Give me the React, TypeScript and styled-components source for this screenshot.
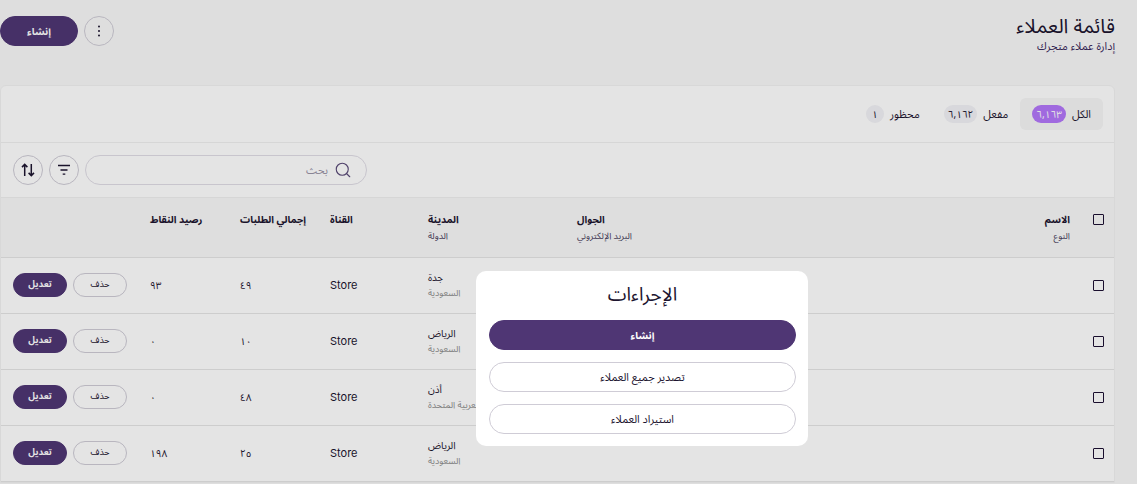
import React from "react";
import styled, { createGlobalStyle } from "styled-components";
import { Search } from "lucide-react";

const FONT = `"Noto Sans Arabic", "Noto Kufi Arabic", "DejaVu Sans", "Inter", sans-serif`;
const COLUMNS = "44px 430px 63px 149px 98px 90px 90px 137px 12px";

const GlobalStyle = createGlobalStyle`
  html, body {
    margin: 0;
    height: 100%;
    overflow: hidden;
  }
  body {
    font-family: ${FONT};
    color: #1d1530;
    background: #f9f9f9;
  }
`;

const Page = styled.div`
  height: 484px;
  overflow: hidden;
  padding: 16px 22px 0 0;
  box-sizing: border-box;
`;

const Header = styled.header`
  display: flex;
  justify-content: space-between;
  align-items: flex-start;
  height: 69px;
`;

const TitleBlock = styled.div`
  display: flex;
  flex-direction: column;
`;

const PageTitle = styled.h1`
  margin: 0;
  font-size: 20px;
  font-weight: 400;
  line-height: 22px;
`;

const PageSubtitle = styled.p`
  margin: 1px 0 0;
  font-size: 11px;
  line-height: 16px;
  color: #3a2a5c;
`;

const HeaderActions = styled.div`
  display: flex;
  gap: 6px;
`;

const Pill = styled.button<{ $width: number; $height: number; $primary?: boolean; $size?: number }>`
  width: ${(p) => p.$width}px;
  height: ${(p) => p.$height}px;
  padding: 0;
  box-sizing: border-box;
  border-radius: 999px;
  border: 1px solid ${(p) => (p.$primary ? "#4f3674" : "#cfccd6")};
  background: ${(p) => (p.$primary ? "#4f3674" : "transparent")};
  color: ${(p) => (p.$primary ? "#fff" : "#1d1530")};
  font-family: ${FONT};
  font-size: ${(p) => p.$size ?? 10}px;
  font-weight: ${(p) => (p.$primary ? 700 : 400)};
  display: flex;
  align-items: center;
  justify-content: center;
`;

const Card = styled.section`
  background: #fff;
  border: 1px solid #f2f2f2;
  border-radius: 6px 6px 0 0;
`;

const Tabs = styled.div`
  display: flex;
  align-items: center;
  height: 56px;
  padding: 0 11px;
  border-bottom: 1px solid #f0f0f0;
`;

const Tab = styled.div<{ $active?: boolean }>`
  display: flex;
  align-items: center;
  gap: 6px;
  height: 32px;
  padding: 0 12px;
  border-radius: 6px;
  font-size: 11px;
  background: ${(p) => (p.$active ? "#f6f6f6" : "transparent")};
`;

const Badge = styled.span<{ $active?: boolean }>`
  min-width: 18px;
  height: 18px;
  padding: 0 4px;
  box-sizing: border-box;
  border-radius: 9px;
  display: flex;
  align-items: center;
  justify-content: center;
  font-size: 10px;
  background: ${(p) => (p.$active ? "#b377fa" : "#f2f2f6")};
  color: ${(p) => (p.$active ? "#fff" : "#1d1530")};
`;

const Toolbar = styled.div`
  display: flex;
  justify-content: flex-end;
  align-items: center;
  gap: 6px;
  height: 54px;
  padding-left: 12px;
`;

const SearchBox = styled.div`
  width: 282px;
  height: 30px;
  box-sizing: border-box;
  border: 1px solid #e0dde6;
  border-radius: 15px;
  display: flex;
  align-items: center;
  gap: 6px;
  padding-right: 14px;
  font-size: 11px;
  color: #9a94a6;
`;

const HeadRow = styled.div`
  display: grid;
  grid-template-columns: ${COLUMNS};
  height: 61px;
  box-sizing: border-box;
  padding-top: 15px;
  background: #f9f9f9;
  border-top: 1px solid #f0f0f0;
  border-bottom: 1px solid #e6e6e6;
`;

const Row = styled.div`
  display: grid;
  grid-template-columns: ${COLUMNS};
  align-items: center;
  height: 56px;
  box-sizing: border-box;
  border-bottom: 1px solid #e6e6e6;
`;

const Cell = styled.div<{ $start?: boolean }>`
  text-align: ${(p) => (p.$start ? "right" : "left")};
  font-size: 10px;
  line-height: 16px;
  white-space: nowrap;
`;

const HeadLabel = styled.div`
  font-size: 10px;
  font-weight: 700;
  line-height: 14px;
`;

const HeadSub = styled.div`
  margin-top: 3px;
  font-size: 9px;
  line-height: 14px;
  color: #4a3f5e;
`;

const Latin = styled.span`
  font-family: "Inter", sans-serif;
  font-size: 11px;
`;

const CitySub = styled.div`
  font-size: 9px;
  line-height: 16px;
  color: #8d8d8d;
`;

const CheckCell = styled.div<{ $head?: boolean }>`
  display: flex;
  justify-content: center;
  padding-left: 12px;
  padding-top: ${(p) => (p.$head ? "1px" : "0")};
`;

const CheckBox = styled.span`
  width: 11px;
  height: 11px;
  box-sizing: border-box;
  border: 1.5px solid #1d1033;
  border-radius: 1px;
  display: block;
`;

const Actions = styled.div`
  display: flex;
  justify-content: flex-end;
  gap: 6px;
  margin-bottom: 2px;
`;

const Overlay = styled.div`
  position: fixed;
  inset: 0;
  background: rgba(0, 0, 0, 0.105);
`;

const Modal = styled.div`
  position: fixed;
  left: 476px;
  top: 271px;
  width: 332px;
  height: 175px;
  box-sizing: border-box;
  padding: 12px 12px 12px 13px;
  border-radius: 10px;
  background: #fff;
  display: flex;
  flex-direction: column;
  gap: 12px;
`;

const ModalTitle = styled.h2`
  margin: 0 0 1px;
  height: 24px;
  text-align: center;
  font-size: 19px;
  font-weight: 400;
  line-height: 24px;
`;

const customers = [
  { city: "جدة", country: "السعودية", orders: "٤٩", points: "٩٣" },
  { city: "الرياض", country: "السعودية", orders: "١٠", points: "٠" },
  { city: "أذن", country: "الإمارات العربية المتحدة", orders: "٤٨", points: "٠" },
  { city: "الرياض", country: "السعودية", orders: "٢٥", points: "١٩٨" },
];

const MoreIcon = () => (
  <svg width="14" height="14" viewBox="0 0 14 14" fill="#1d1530">
    <circle cx="7" cy="2.5" r="1" />
    <circle cx="7" cy="7" r="1" />
    <circle cx="7" cy="11.5" r="1" />
  </svg>
);

const FilterIcon = () => (
  <svg width="14" height="14" viewBox="0 0 14 14" stroke="#1d1530" strokeWidth="1.3" fill="none">
    <path d="M1 2.5h12M3.5 7h7M5.7 11.2h2.6" />
  </svg>
);

const SortIcon = () => (
  <svg width="14" height="14" viewBox="0 0 14 14" stroke="#1d1530" strokeWidth="1.5" fill="none">
    <path d="M3.7 13V1.4M1 4.1l2.7-2.7 2.7 2.7" />
    <path d="M10.3 1v11.6M7.6 9.9l2.7 2.7 2.7-2.7" />
  </svg>
);

const App: React.FC = () => {
  return (
    <>
      <GlobalStyle />
      <Page dir="rtl">
        <Header>
          <TitleBlock>
            <PageTitle>قائمة العملاء</PageTitle>
            <PageSubtitle>إدارة عملاء متجرك</PageSubtitle>
          </TitleBlock>
          <HeaderActions>
            <Pill $width={30} $height={30}>
              <MoreIcon />
            </Pill>
            <Pill $width={78} $height={30} $primary>
              إنشاء
            </Pill>
          </HeaderActions>
        </Header>

        <Card>
          <Tabs>
            <Tab $active>
              الكل <Badge $active>٦,١٦٣</Badge>
            </Tab>
            <Tab>
              مفعل <Badge>٦,١٦٢</Badge>
            </Tab>
            <Tab>
              محظور <Badge>١</Badge>
            </Tab>
          </Tabs>

          <Toolbar>
            <SearchBox>
              <Search size={18} color="#5a4a78" strokeWidth={1.5} />
              بحث
            </SearchBox>
            <Pill $width={30} $height={30}>
              <FilterIcon />
            </Pill>
            <Pill $width={30} $height={30}>
              <SortIcon />
            </Pill>
          </Toolbar>

          <HeadRow>
            <CheckCell $head>
              <CheckBox />
            </CheckCell>
            <Cell $start>
              <HeadLabel>الاسم</HeadLabel>
              <HeadSub>النوع</HeadSub>
            </Cell>
            <Cell>
              <HeadLabel>الجوال</HeadLabel>
              <HeadSub>البريد الإلكتروني</HeadSub>
            </Cell>
            <Cell>
              <HeadLabel>المدينة</HeadLabel>
              <HeadSub>الدولة</HeadSub>
            </Cell>
            <Cell>
              <HeadLabel>القناة</HeadLabel>
            </Cell>
            <Cell>
              <HeadLabel>إجمالي الطلبات</HeadLabel>
            </Cell>
            <Cell>
              <HeadLabel>رصيد النقاط</HeadLabel>
            </Cell>
          </HeadRow>

          {customers.map((c, i) => (
            <Row key={i}>
              <CheckCell>
                <CheckBox />
              </CheckCell>
              <Cell />
              <Cell />
              <Cell>
                {c.city}
                <CitySub>{c.country}</CitySub>
              </Cell>
              <Cell>
                <Latin>Store</Latin>
              </Cell>
              <Cell>{c.orders}</Cell>
              <Cell>{c.points}</Cell>
              <Actions>
                <Pill $width={54} $height={24} $size={9}>
                  حذف
                </Pill>
                <Pill $width={54} $height={24} $size={9} $primary>
                  تعديل
                </Pill>
              </Actions>
            </Row>
          ))}
        </Card>
      </Page>

      <Overlay />
      <Modal dir="rtl">
        <ModalTitle>الإجراءات</ModalTitle>
        <Pill $width={307} $height={30} $primary>
          إنشاء
        </Pill>
        <Pill $width={307} $height={30} $size={11}>
          تصدير جميع العملاء
        </Pill>
        <Pill $width={307} $height={30} $size={11}>
          استيراد العملاء
        </Pill>
      </Modal>
    </>
  );
};

export default App;
